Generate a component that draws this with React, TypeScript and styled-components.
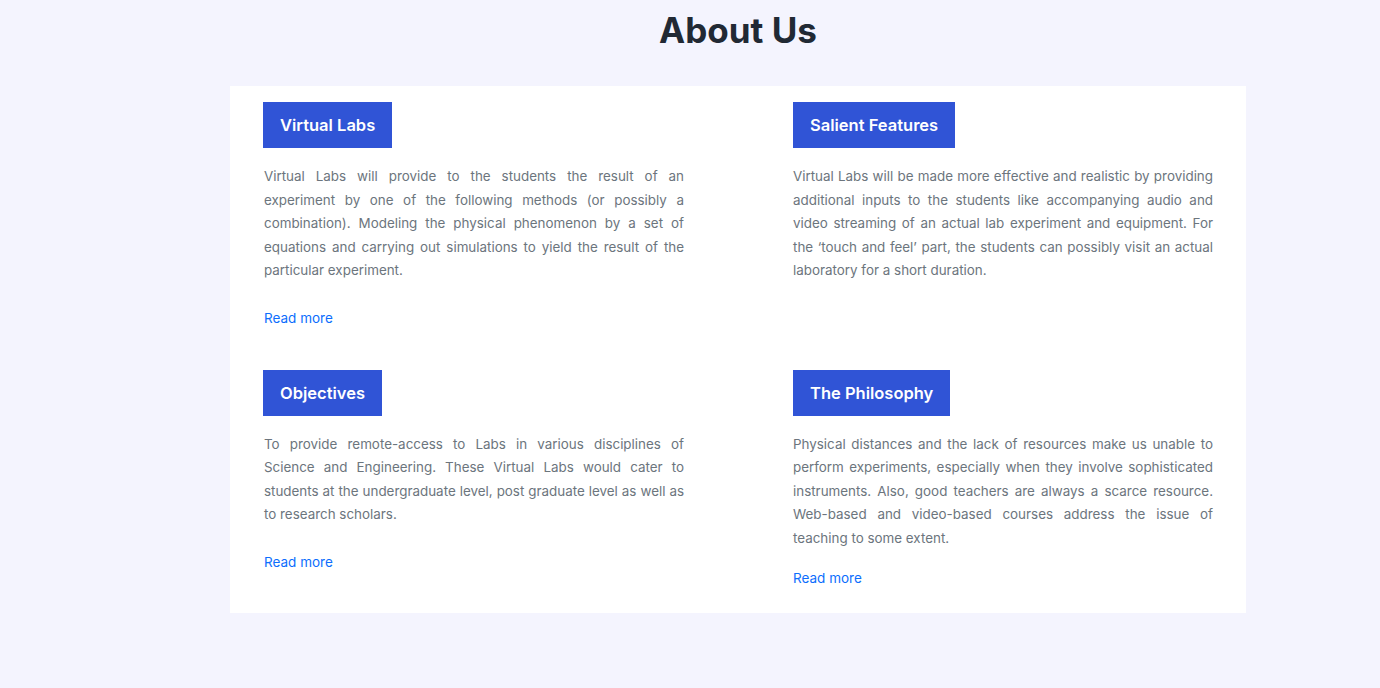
import React from "react";
import styled, { createGlobalStyle } from "styled-components";

const GlobalStyle = createGlobalStyle`
  html, body {
    margin: 0;
    padding: 0;
    background: #f4f4fe;
    font-family: Inter, "Noto Sans", sans-serif;
  }
  * { box-sizing: border-box; }
`;

const Page = styled.main`
  width: 1380px;
  min-height: 688px;
  padding-top: 9px;
`;

const Title = styled.h1`
  margin: 0 0 34px;
  padding-left: 96px;
  text-align: center;
  font-size: 35px;
  line-height: 43px;
  font-weight: 700;
  color: #212934;
`;

const Card = styled.section`
  width: 1016px;
  margin-left: 230px;
  background: #ffffff;
  padding: 16px 33px 25px 34px;
  display: grid;
  grid-template-columns: 420px 420px;
  column-gap: 109px;
  row-gap: 42px;
`;

const Item = styled.article`
  display: flex;
  flex-direction: column;
  align-items: flex-start;
`;

const Heading = styled.h2<{ $shift: number }>`
  margin: 0 0 0 ${(p) => p.$shift}px;
  background: #3054d6;
  color: #ffffff;
  font-size: 16.5px;
  font-weight: 600;
  line-height: 46px;
  height: 46px;
  padding: 0 17px;
`;

const Text = styled.p<{ $after: number }>`
  margin: 17px 0 ${(p) => p.$after}px;
  font-size: 13.4px;
  line-height: 23.5px;
  color: #6c757d;
  text-align: justify;
`;

const ReadMore = styled.a`
  font-size: 13.5px;
  line-height: 20px;
  color: #0d6efd;
  text-decoration: none;
`;

const items = [
  {
    title: "Virtual Labs",
    text: "Virtual Labs will provide to the students the result of an experiment by one of the following methods (or possibly a combination). Modeling the physical phenomenon by a set of equations and carrying out simulations to yield the result of the particular experiment.",
    more: true,
    after: 25,
    shift: -1,
  },
  {
    title: "Salient Features",
    text: "Virtual Labs will be made more effective and realistic by providing additional inputs to the students like accompanying audio and video streaming of an actual lab experiment and equipment. For the \u2018touch and feel\u2019 part, the students can possibly visit an actual laboratory for a short duration.",
    more: false,
    after: 0,
    shift: 0,
  },
  {
    title: "Objectives",
    text: "To provide remote-access to Labs in various disciplines of Science and Engineering. These Virtual Labs would cater to students at the undergraduate level, post graduate level as well as to research scholars.",
    more: true,
    after: 25,
    shift: -1,
  },
  {
    title: "The Philosophy",
    text: "Physical distances and the lack of resources make us unable to perform experiments, especially when they involve sophisticated instruments. Also, good teachers are always a scarce resource. Web-based and video-based courses address the issue of teaching to some extent.",
    more: true,
    after: 18,
    shift: 0,
  },
];

export default function App() {
  return (
    <>
      <GlobalStyle />
      <Page>
        <Title>About Us</Title>
        <Card>
          {items.map((it) => (
            <Item key={it.title}>
              <Heading $shift={it.shift}>{it.title}</Heading>
              <Text $after={it.after}>{it.text}</Text>
              {it.more && <ReadMore href="#">Read more</ReadMore>}
            </Item>
          ))}
        </Card>
      </Page>
    </>
  );
}
